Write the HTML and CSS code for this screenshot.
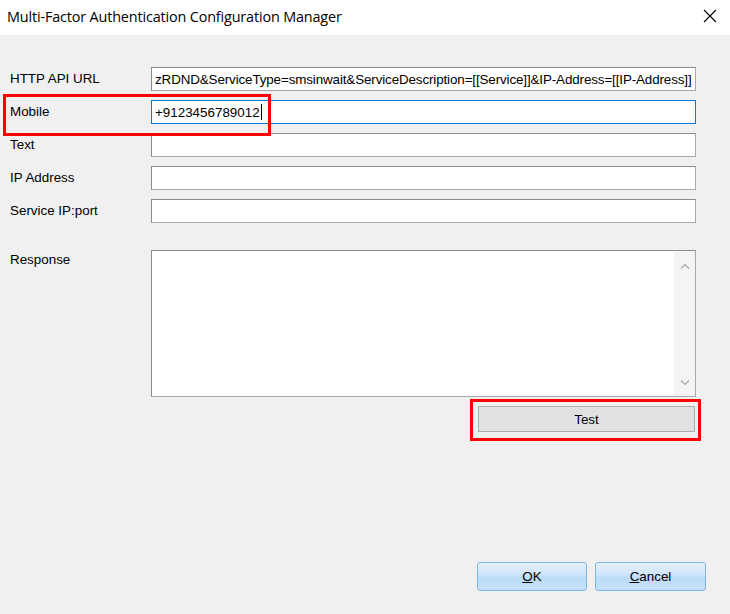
FILE: index.html
```html
<!DOCTYPE html>
<html>
<head>
<meta charset="utf-8">
<link rel="stylesheet" href="styles.css">
</head>
<body>
<div class="window">
  <div class="titlebar">
    <span class="title">Multi-Factor Authentication Configuration Manager</span>
    <svg class="close" width="14" height="14" viewBox="0 0 14 14"><path d="M1 1 L13 13 M13 1 L1 13" stroke="#000" stroke-width="1.1" fill="none"/></svg>
  </div>
  <div class="client">
    <div class="form">
      <label class="lbl">HTTP API URL</label>
      <div class="field url"><span class="val">zRDND&amp;ServiceType=smsinwait&amp;ServiceDescription=[[Service]]&amp;IP-Address=[[IP-Address]]</span></div>
      <label class="lbl">Mobile</label>
      <div class="field focused"><span class="val">+9123456789012</span><span class="caret"></span></div>
      <label class="lbl">Text</label>
      <div class="field"></div>
      <label class="lbl">IP Address</label>
      <div class="field"></div>
      <label class="lbl">Service IP:port</label>
      <div class="field"></div>
    </div>
    <div class="response-row">
      <label class="lbl resp-lbl">Response</label>
      <div class="textarea">
        <div class="scrollbar">
          <svg width="10" height="6" viewBox="0 0 10 6"><path d="M1 5.5 L5 1.5 L9 5.5" stroke="#a6a6a6" stroke-width="1.2" fill="none"/></svg>
          <svg width="10" height="6" viewBox="0 0 10 6"><path d="M1 0.5 L5 4.5 L9 0.5" stroke="#a6a6a6" stroke-width="1.2" fill="none"/></svg>
        </div>
      </div>
    </div>
    <div class="test-row">
      <button class="btn test">Test</button>
    </div>
    <div class="footer">
      <button class="btn blue"><u>O</u>K</button>
      <button class="btn blue"><u>C</u>ancel</button>
    </div>
  </div>
  <div class="mark mark-mobile"></div>
  <div class="mark mark-test"></div>
</div>
</body>
</html>
```

FILE: styles.css
```css
html, body {
  margin: 0;
  padding: 0;
}
body {
  width: 730px;
  height: 614px;
  overflow: hidden;
  background: #f0f0f0;
  font-family: "Liberation Sans", Arial, sans-serif;
  font-size: 13.4px;
  color: #000;
}
.window {
  position: relative;
  width: 730px;
  height: 614px;
  display: flex;
  flex-direction: column;
}
.titlebar {
  height: 35px;
  background: #fff;
  display: flex;
  align-items: center;
  justify-content: space-between;
  padding: 0 13px 0 7px;
  box-sizing: border-box;
  flex: none;
}
.title {
  font-family: "Open Sans", "Noto Sans", sans-serif;
  font-size: 14.4px;
  color: #000;
  margin-top: -3px;
  letter-spacing: -0.15px;
}
.close {
  margin-top: -3px;
}
.client {
  flex: 1;
  display: flex;
  flex-direction: column;
  background: #f0f0f0;
}
.form {
  display: grid;
  grid-template-columns: 151px 545px;
  grid-auto-rows: 24px;
  row-gap: 9px;
  padding-top: 32px;
  align-items: center;
}
.lbl {
  padding-left: 10px;
  white-space: nowrap;
  margin-top: -1px;
}
.field {
  height: 24px;
  box-sizing: border-box;
  background: #fff;
  border: 1px solid #8c8c8c;
  border-right-color: #a8a8a8;
  border-bottom-color: #a8a8a8;
  display: flex;
  align-items: center;
  padding: 0 3px;
  overflow: hidden;
  white-space: nowrap;
}
.field.url {
  letter-spacing: -0.12px;
}
.field.focused {
  border-color: #0078d7;
}
.caret {
  display: inline-block;
  width: 1px;
  height: 16px;
  background: #000;
  margin-left: 1px;
}
.response-row {
  display: grid;
  grid-template-columns: 151px 545px;
  margin-top: 27px;
}
.resp-lbl {
  padding-top: 3px;
}
.textarea {
  height: 147px;
  box-sizing: border-box;
  background: #fff;
  border: 1px solid #8c8c8c;
  border-right-color: #a8a8a8;
  border-bottom-color: #a8a8a8;
  display: flex;
  justify-content: flex-end;
}
.scrollbar {
  width: 21px;
  background: #f4f4f4;
  display: flex;
  flex-direction: column;
  justify-content: space-between;
  align-items: center;
  padding: 12px 0 10px;
}
.test-row {
  display: flex;
  padding-left: 478px;
  margin-top: 9px;
}
.btn {
  font-family: "Liberation Sans", Arial, sans-serif;
  font-size: 13.4px;
  color: #000;
  padding: 0;
  margin: 0;
}
.test {
  width: 217px;
  height: 26px;
  background: #e1e1e1;
  border: 1px solid #adadad;
}
.footer {
  margin-top: auto;
  display: flex;
  gap: 8px;
  padding-left: 477px;
  padding-bottom: 23px;
}
.blue {
  width: 110px;
  height: 29px;
  border: 1px solid #7eb4ea;
  border-radius: 3px;
  background: linear-gradient(#e5f1fb 0%, #cde4fa 45%, #bcdbf8 55%, #c5e0fa 100%);
}
.blue + .blue {
  width: 111px;
}
.mark {
  position: absolute;
  border: 3px solid #ff0000;
  box-sizing: border-box;
  pointer-events: none;
}
.mark-mobile {
  left: 3px;
  top: 94px;
  width: 268px;
  height: 42px;
}
.mark-test {
  left: 470px;
  top: 399px;
  width: 231px;
  height: 42px;
}
```
